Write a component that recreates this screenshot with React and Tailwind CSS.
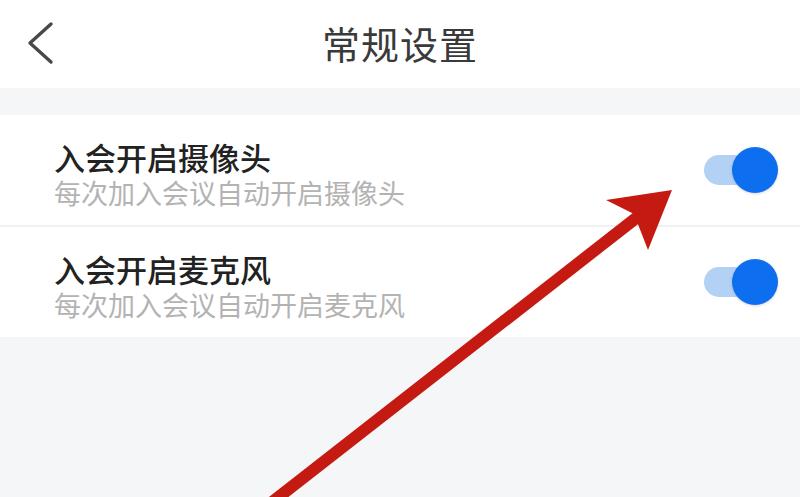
const FONT = { fontFamily: '"Noto Sans CJK SC", "Noto Sans", sans-serif' };

const settings = [
  { title: "入会开启摄像头", desc: "每次加入会议自动开启摄像头" },
  { title: "入会开启麦克风", desc: "每次加入会议自动开启麦克风" },
];

const Toggle = () => (
  <div className="relative w-[74px] h-[46px] flex items-center">
    <div className="absolute left-0 top-[8px] w-[56px] h-[30px] rounded-full bg-[#b3d0f5]" />
    <div className="absolute right-0 top-0 w-[46px] h-[46px] rounded-full bg-[#0d6ef0] shadow-[0_1px_3px_rgba(0,0,0,0.15)]" />
  </div>
);

export default function App() {
  return (
    <div className="relative w-[800px] h-[497px] overflow-hidden bg-[#f5f6f8]" style={FONT}>
      {/* Header */}
      <header className="relative h-[88px] bg-white flex items-center justify-center">
        <svg className="absolute left-[22px] top-[20px]" width="36" height="46" viewBox="0 0 36 46">
          <polyline points="29,4 8,23 29,42" fill="none" stroke="#484848" strokeWidth="3.4" strokeLinecap="round" strokeLinejoin="round" />
        </svg>
        <h1 className="text-[38px] leading-none text-[#3a3a3a] tracking-[1px] -mt-[2px]">常规设置</h1>
      </header>

      {/* Settings list */}
      <div className="mt-[27px] bg-white">
        {settings.map((s, i) => (
          <div key={i}>
            {i > 0 && <div className="h-[2px] bg-[#f0f1f3]" />}
            <div className="h-[110px] flex items-center justify-between pl-[54px] pr-[22px]">
              <div className="flex flex-col pt-[8px]">
                <span className="text-[31px] leading-[38px] text-[#222] font-medium">{s.title}</span>
                <span className="text-[27px] leading-[34px] text-[#b3b3b3]">{s.desc}</span>
              </div>
              <Toggle />
            </div>
          </div>
        ))}
      </div>

      {/* Red annotation arrow */}
      <svg className="absolute inset-0 pointer-events-none" width="800" height="497" viewBox="0 0 800 497">
        <line x1="262" y1="510" x2="640" y2="215" stroke="#c41a12" strokeWidth="12" />
        <polygon points="672,190 606,200 634,214 648,250" fill="#c41a12" />
      </svg>
    </div>
  );
}
